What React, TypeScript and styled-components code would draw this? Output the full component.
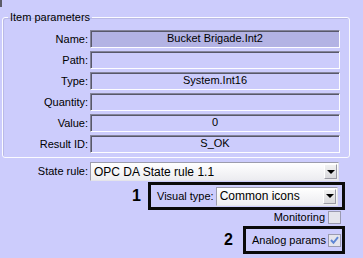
import React from "react";
import styled, { createGlobalStyle } from "styled-components";

const GlobalStyle = createGlobalStyle`
  html, body {
    margin: 0;
    padding: 0;
    background: #ccccfc;
  }
  body {
    font-family: "Liberation Sans", Arial, sans-serif;
    font-size: 11px;
    color: #000;
  }
`;

const Page = styled.div`
  position: relative;
  width: 363px;
  height: 258px;
  overflow: hidden;
  background: #ccccfc;
  display: flex;
  flex-direction: column;

  &::before {
    content: "";
    position: absolute;
    left: 0;
    top: 0;
    width: 2px;
    height: 7px;
    background: #5c5c68;
  }
`;

const Group = styled.fieldset`
  box-sizing: border-box;
  width: 348px;
  margin: 11px 0 0 2px;
  padding: 6px 8px 4px 0;
  border: 1px solid #fbfbff;
  border-radius: 3px;
  box-shadow: inset 1px 1px 0 #b9b9e6;
  min-inline-size: 0;
`;

const Legend = styled.legend`
  margin-left: 5px;
  padding: 0 2px;
  line-height: 13px;
`;

const Rows = styled.div`
  display: grid;
  grid-template-columns: 85px 250px;
  column-gap: 2px;
  row-gap: 3px;
  align-items: center;
`;

const Label = styled.div`
  text-align: right;
  white-space: nowrap;
  line-height: 13px;
`;

const Field = styled.div<{ $shaded?: boolean }>`
  box-sizing: border-box;
  height: 18px;
  line-height: 15px;
  text-align: center;
  white-space: nowrap;
  background: ${p => (p.$shaded ? "#b3b3e4" : "#ccccfc")};
  border-style: solid;
  border-width: 1px;
  border-color: #84849a #fdfdff #fdfdff #84849a;
  box-shadow: inset 1px 1px 0 #58586a;
`;

const StateRow = styled.div`
  display: grid;
  grid-template-columns: 88px 249px;
  column-gap: 2px;
  align-items: center;
  margin-top: 4px;
`;

const Combo = styled.div`
  box-sizing: border-box;
  height: 19px;
  flex: 1;
  display: flex;
  align-items: center;
  padding-left: 3px;
  background: linear-gradient(#ffffff, #ececf0);
  border: 1px solid;
  border-color: #9c9cac #e4e4ea #e4e4ea #9c9cac;
  font-size: 12px;
  white-space: nowrap;

  span {
    flex: 1;
  }
`;

const DropButton = styled.div`
  box-sizing: border-box;
  width: 13px;
  height: 15px;
  margin-right: 1px;
  display: flex;
  align-items: center;
  justify-content: center;
  background: linear-gradient(#f2f2f2, #d8d8dc);
  border: 1px solid;
  border-color: #ffffff #9a9aa4 #9a9aa4 #ffffff;

  &::after {
    content: "";
    border-left: 4px solid transparent;
    border-right: 4px solid transparent;
    border-top: 4px solid #000;
  }
`;

const MarkRow = styled.div<{ $gap: number; $top: number }>`
  display: flex;
  justify-content: flex-end;
  align-items: center;
  gap: ${p => p.$gap}px;
  padding-right: 18px;
  margin-top: ${p => p.$top}px;
`;

const Number = styled.div`
  font-size: 16px;
  font-weight: bold;
  line-height: 16px;
`;

const Frame = styled.div<{ $width: number }>`
  box-sizing: border-box;
  width: ${p => p.$width}px;
  height: 28px;
  border: 3px solid #0a0a0a;
  display: flex;
  align-items: center;
  gap: 2px;
  padding: 0 4px 0 6px;
`;

const CheckFrame = styled(Frame)`
  justify-content: flex-end;
  padding: 0 1px 0 0;
`;

const CheckLine = styled.div`
  display: flex;
  justify-content: flex-end;
  align-items: center;
  gap: 3px;
  padding-right: 22px;
  margin-top: 1px;
`;

const Box = styled.div`
  box-sizing: border-box;
  width: 13px;
  height: 13px;
  background: #e4e4ec;
  border: 1px solid #9a9ab0;
  display: flex;
  align-items: center;
  justify-content: center;
`;

const rows: Array<[string, string, boolean?]> = [
  ["Name:", "Bucket Brigade.Int2", true],
  ["Path:", ""],
  ["Type:", "System.Int16"],
  ["Quantity:", ""],
  ["Value:", "0"],
  ["Result ID:", "S_OK"],
];

export default function App() {
  return (
    <Page>
      <GlobalStyle />
      <Group>
        <Legend>Item parameters</Legend>
        <Rows>
          {rows.map(([label, value, shaded]) => (
            <React.Fragment key={label}>
              <Label>{label}</Label>
              <Field $shaded={shaded}>{value}</Field>
            </React.Fragment>
          ))}
        </Rows>
      </Group>

      <StateRow>
        <Label>State rule:</Label>
        <Combo>
          <span>OPC DA State rule 1.1</span>
          <DropButton />
        </Combo>
      </StateRow>

      <MarkRow $gap={7} $top={1}>
        <Number>1</Number>
        <Frame $width={197}>
          <Label>Visual type:</Label>
          <Combo>
            <span>Common icons</span>
            <DropButton />
          </Combo>
        </Frame>
      </MarkRow>

      <CheckLine>
        <Label>Monitoring</Label>
        <Box />
      </CheckLine>

      <MarkRow $gap={10} $top={2}>
        <Number>2</Number>
        <CheckFrame $width={102}>
          <Label>Analog params</Label>
          <Box>
            <svg width="9" height="9" viewBox="0 0 9 9">
              <path d="M1 4 L3.5 6.8 L8 1.2" fill="none" stroke="#5f86d4" strokeWidth="2" />
            </svg>
          </Box>
        </CheckFrame>
      </MarkRow>
    </Page>
  );
}
